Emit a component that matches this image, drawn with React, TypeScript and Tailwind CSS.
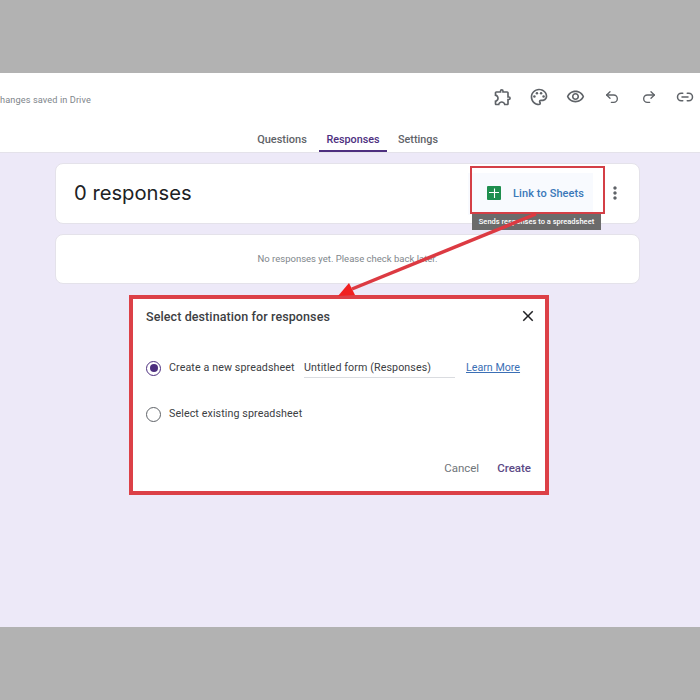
import { MdOutlineExtension, MdOutlinePalette, MdOutlineRemoveRedEye, MdClose, MdMoreVert } from 'react-icons/md';
import { Undo2, Redo2, Link2 } from 'lucide-react';

function SheetsIcon() {
  return (
    <svg width="14" height="14" viewBox="0 0 14 14" className="-mt-[1px]">
      <rect width="14" height="14" rx="1" fill="#1e8e4e" />
      <path d="M2 6.5h10M7.5 2.5v9.5" stroke="#fff" strokeWidth="1.1" fill="none" />
    </svg>
  );
}

export default function App() {
  return (
    <div className="relative w-[700px] h-[700px] overflow-hidden bg-[#b2b2b2] font-['Roboto',sans-serif]">
      <div className="h-[73px]" />

      {/* Header */}
      <div className="h-[80px] bg-white border-b border-[#e4e2ea] flex flex-col">
        <div className="h-[53px] flex items-center justify-between pr-[5px]">
          <span className="text-[9.2px] text-[#80868b] tracking-[0.1px] mt-[1px]">hanges saved in Drive</span>
          <div className="flex items-center gap-[16.4px] -mt-[5px]">
            <div className="w-[20px] flex justify-center"><MdOutlineExtension size={20} className="text-[#5f6368]" /></div>
            <div className="w-[20px] flex justify-center"><MdOutlinePalette size={20} className="text-[#5f6368]" /></div>
            <div className="w-[20px] flex justify-center"><MdOutlineRemoveRedEye size={19} className="text-[#5f6368]" /></div>
            <div className="w-[20px] flex justify-center"><Undo2 size={16} strokeWidth={2} className="text-[#5f6368]" /></div>
            <div className="w-[20px] flex justify-center"><Redo2 size={16} strokeWidth={2} className="text-[#5f6368]" /></div>
            <div className="w-[20px] flex justify-center"><Link2 size={18} strokeWidth={2} className="text-[#5f6368]" /></div>
          </div>
        </div>
        <div className="flex-1 flex pl-[251px]">
          <div className="w-[62px] pt-[2px] text-center text-[11px] font-medium text-[#5f6368] leading-[25px]">Questions</div>
          <div className="ml-[6px] w-[68px] h-[27px] pt-[2px] text-center text-[10.8px] font-medium text-[#4d2f7f] leading-[25px] border-b-2 border-[#4d2f7f]">Responses</div>
          <div className="ml-[8px] w-[46px] pt-[2px] text-center text-[10.8px] font-medium text-[#5f6368] leading-[25px]">Settings</div>
        </div>
      </div>

      {/* Page body */}
      <div className="h-[474px] bg-[#ede9f8] flex flex-col items-center pt-[10px]">
        <div className="w-[585px] ml-[-5px] h-[61px] bg-white rounded-lg border border-[#e4e2ea] flex items-center justify-between pl-[18px] pr-[14px]">
          <span className="text-[20.2px] text-[#202124] font-['Inter',sans-serif]">0 responses</span>
          <div className="flex items-center gap-[12px]">
            <div className="w-[125px] h-[42px] bg-[#f8fafe] flex items-center gap-[12px] pl-[19px]">
              <SheetsIcon />
              <span className="text-[11px] font-medium text-[#3b78b9] tracking-[0.1px] mt-[1px]">Link to Sheets</span>
            </div>
            <MdMoreVert size={20} className="text-[#5f6368] -mt-[1px]" />
          </div>
        </div>

        <div className="w-[585px] ml-[-5px] mt-[10px] h-[50px] bg-white rounded-lg border border-[#e4e2ea] flex items-center justify-center">
          <span className="text-[9.5px] text-[#80868b]">No responses yet. Please check back later.</span>
        </div>

        {/* Destination dialog */}
        <div className="w-[420px] ml-[-22px] mt-[11px] h-[200px] bg-white border-[4px] border-[#dc4047] flex flex-col px-[13px]">
          <div className="flex items-center justify-between h-[36px]">
            <span className="text-[12.5px] font-medium text-[#3c4043] tracking-[0.1px]">Select destination for responses</span>
            <MdClose size={18} className="text-[#202124] mr-[-5px] -mt-[2px]" />
          </div>
          <div className="flex items-center mt-[21px] h-[24px]">
            <div className="w-[15px] h-[15px] rounded-full border-[1.5px] border-[#4d2f7f] flex items-center justify-center">
              <div className="w-[8px] h-[8px] rounded-full bg-[#4d2f7f]" />
            </div>
            <span className="ml-[8px] text-[10.7px] text-[#3c4043] tracking-[0.1px] w-[135px]">Create a new spreadsheet</span>
            <div className="w-[151px] h-[20px] border-b border-[#dadce0] text-[10.7px] text-[#3c4043] leading-[19px] tracking-[0.1px]">Untitled form (Responses)</div>
            <span className="ml-[11px] text-[10.7px] text-[#3b6fb5] underline">Learn More</span>
          </div>
          <div className="flex items-center mt-[22px] h-[24px]">
            <div className="w-[15px] h-[15px] rounded-full border-[1.5px] border-[#5f6368]" />
            <span className="ml-[8px] text-[10.7px] text-[#3c4043] tracking-[0.1px]">Select existing spreadsheet</span>
          </div>
          <div className="flex justify-end gap-[18px] mt-[34px] pr-[1px]">
            <span className="text-[11.5px] font-normal text-[#70757a]">Cancel</span>
            <span className="text-[11.5px] font-medium text-[#5b4a86]">Create</span>
          </div>
        </div>
      </div>

      <div className="h-[73px]" />

      {/* Red highlight box over the Sheets button */}
      <div className="absolute left-[470px] top-[166px] w-[135px] h-[48px] border-2 border-[#d43f46]" />

      {/* Tooltip */}
      <div className="absolute left-[472px] top-[214px] w-[129px] h-[16px] bg-[#6b6b6b] text-[7.5px] font-medium text-white flex items-center justify-center whitespace-nowrap">
        Sends responses to a spreadsheet
      </div>

      {/* Arrow */}
      <svg className="absolute left-0 top-0 pointer-events-none" width="700" height="700">
        <line x1="536" y1="214" x2="352" y2="289" stroke="#dc3a42" strokeWidth="3.5" />
        <polygon points="338,296 349,283 355,295" fill="#f02020" />
      </svg>
    </div>
  );
}
